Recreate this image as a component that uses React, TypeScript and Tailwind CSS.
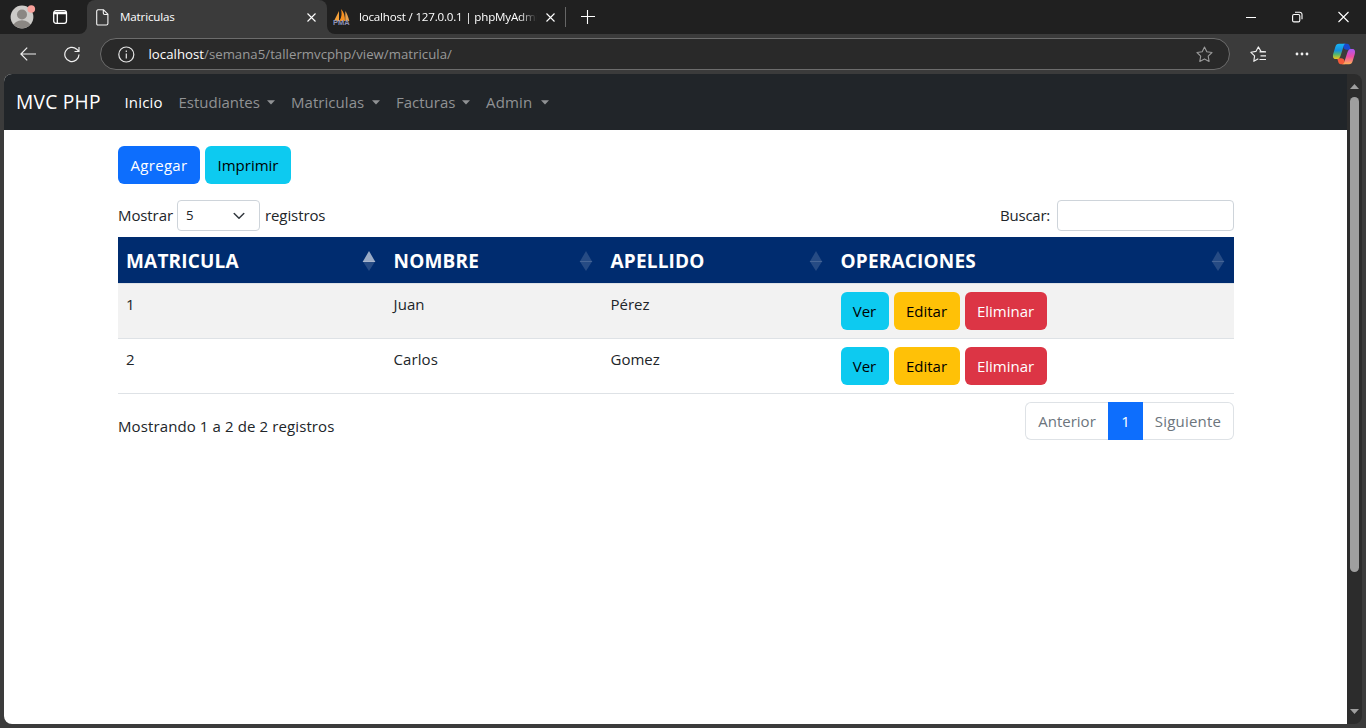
import type { ReactNode } from "react";

function NavItem({ label, className }: { label: string; className: string }) {
  return (
    <a className={`flex items-center justify-between text-[#909294] ${className}`}>
      <span>{label}</span>
      <svg width="8" height="5" viewBox="0 0 8 5" fill="currentColor"><path d="M0 .3h8L4 4.5z" /></svg>
    </a>
  );
}

function Button({ children, className }: { children: ReactNode; className: string }) {
  return (
    <button className={`flex h-[38px] shrink-0 items-center justify-center rounded-md pt-px whitespace-nowrap ${className}`}>
      {children}
    </button>
  );
}

function Sort({ active }: { active?: boolean }) {
  return (
    <svg width="14" height="20" viewBox="0 0 14 20" fill="#fff" className="shrink-0">
      <path d="M7 0l6.4 11H.6z" opacity={active ? 0.6 : 0.15} />
      <path d="M.6 10h12.8L7 20z" opacity={0.15} />
    </svg>
  );
}

const columns = [
  { title: "MATRICULA", active: true },
  { title: "NOMBRE" },
  { title: "APELLIDO" },
  { title: "OPERACIONES" },
];

const rows = [
  { id: "1", nombre: "Juan", apellido: "Pérez" },
  { id: "2", nombre: "Carlos", apellido: "Gomez" },
];

const grid = "grid grid-cols-[267.5px_217px_230px_401.5px]";

function TabStrip() {
  return (
    <div className="flex h-[34px] bg-[#3b3b3b] text-[11.6px] text-white">
      <div className="flex w-[87px] items-center rounded-br-lg bg-[#202020] pl-[10px]">
        <svg width="26" height="28" viewBox="0 0 26 28">
          <defs><clipPath id="avatar"><circle cx="12" cy="14" r="11.2" /></clipPath></defs>
          <circle cx="12" cy="14" r="11.4" fill="#cdcbc8" />
          <g clipPath="url(#avatar)" fill="#8b8783">
            <circle cx="12" cy="11.5" r="5" />
            <ellipse cx="12" cy="23" rx="8.5" ry="5.8" />
          </g>
          <circle cx="21.3" cy="6" r="3.8" fill="#f9a09a" />
        </svg>
        <svg className="ml-[16px]" width="16" height="16" viewBox="0 0 16 16" fill="none" stroke="#fff" strokeWidth="1.3">
          <rect x="1.7" y="1.7" width="12.8" height="12.6" rx="2.3" />
          <path d="M2 3.3h12.3M2 4.6h12.3M5.3 5v9" />
        </svg>
      </div>
      <div className="flex w-[240px] items-center bg-[#202020]">
        <div className="flex h-full w-full items-center rounded-t-lg bg-[#3b3b3b] pl-[9px]">
          <svg width="13" height="17" viewBox="0 0 13 17" fill="none" stroke="#f5f5f5" strokeWidth="1.1">
            <path d="M2 .8h5.5l4.4 4.4v9.3a1.5 1.5 0 0 1-1.5 1.5H2A1.3 1.3 0 0 1 .7 14.5V2.3A1.4 1.4 0 0 1 2 .8zM7.3.8v3.3c0 .9.5 1.4 1.4 1.4h3.2" />
          </svg>
          <span className="ml-[11px] w-[187px] tracking-[-0.15px]">Matriculas</span>
          <svg width="9" height="9" viewBox="0 0 9 9" stroke="#fff" strokeWidth="1.1"><path d="M.5.5l8 8M8.5.5l-8 8" /></svg>
        </div>
      </div>
      <div className="flex flex-1 items-center rounded-bl-lg bg-[#202020] pl-[6px]">
        <svg width="17" height="17" viewBox="0 0 17 17">
          <path d="M1 12L6 2v10z" fill="#f5a13a" />
          <path d="M6.300 12C9 8 9 4 8 0c3 3 4 7 4 12z" fill="#f78f1e" />
          <path d="M12.300 12V2c2 3 3 6 4 10z" fill="#e8a04c" />
          <text x="0" y="16" fontSize="7" fontWeight="700" textLength="16.5" lengthAdjust="spacingAndGlyphs" fill="#8d91b8" fontFamily="Liberation Sans">PMA</text>
        </svg>
        <span className="ml-[9px] w-[178px] overflow-hidden mask-r-from-90% whitespace-nowrap tracking-[-0.2px]">localhost / 127.0.0.1 | phpMyAdmin</span>
        <svg className="ml-[9px]" width="9" height="9" viewBox="0 0 9 9" stroke="#fff" strokeWidth="1.1"><path d="M.5.5l8 8M8.5.5l-8 8" /></svg>
        <span className="ml-[10px] h-5 w-px bg-[#666]" />
        <svg className="ml-[15px]" width="14" height="14" viewBox="0 0 14 14" stroke="#fff" strokeWidth="1.1"><path d="M0 6.500h14M6.500 0v14" /></svg>
        <svg className="mr-[16px] ml-auto" width="104" height="12" viewBox="0 0 104 12" fill="none" stroke="#fff" strokeWidth="1.1">
          <path d="M0 6.500h10M92.500 1l10 10M102.500 1l-10 10" />
          <rect x="46.6" y="3.5" width="7.2" height="7.4" rx="1.4" />
          <path d="M49 1.300h4.800a2.200 2.200 0 0 1 2.200 2.200v4.800" />
        </svg>
      </div>
    </div>
  );
}

const star = "M8.5 1l2.3 4.8 5.2.7-3.8 3.7.9 5.2-4.6-2.5-4.7 2.5.9-5.2L1 6.5l5.2-.7z";

function Toolbar() {
  return (
    <div className="flex h-10 items-center bg-[#3b3b3b] pl-5">
      <svg width="16" height="14" viewBox="0 0 16 14" fill="none" stroke="#f0f0f0" strokeWidth="1.2"><path d="M16 7H1M7.2.7L.9 7l6.3 6.3" /></svg>
      <svg className="ml-[28px]" width="16" height="17" viewBox="0 0 16 17" fill="none" stroke="#f0f0f0" strokeWidth="1.2"><path d="M15 8.5A7.1 7.1 0 1 1 12.7 3.2L15 5.4M15 1v4.5h-4.5" /></svg>
      <div className="ml-5 flex h-8 w-[1130px] items-center rounded-full border border-[#6c6c6c] bg-[#292929] pl-[16.5px]">
        <svg width="17" height="17" viewBox="0 0 17 17" fill="none" stroke="#e6e6e6" strokeWidth="1.2">
          <circle cx="8.3" cy="8.5" r="7.5" /><path d="M8.3 7.5v5M8.3 4.5v1.4" />
        </svg>
        <span className="ml-[14px] pt-px text-[13.2px] tracking-[0.03px] text-[#999]"><span className="text-white">localhost</span>/semana5/tallermvcphp/view/matricula/</span>
        <svg className="mr-[16px] ml-auto" width="17" height="17" viewBox="0 0 17 17" fill="none" stroke="#999" strokeWidth="1.1"><path d={star} strokeLinejoin="round" /></svg>
      </div>
      <svg className="ml-[20px]" width="17" height="17" viewBox="0 0 17 17" fill="none" stroke="#f0f0f0" strokeWidth="1.15" strokeLinejoin="round">
        <path d="M16 5.8l-5-.4L8.3.9 5.9 5.4.9 6.3l3.7 3.6-.8 5.4 4.5-2.5M9.5 5.9H16M10.5 9.8H16M9.5 13.5H16" />
      </svg>
      <svg className="ml-[28px]" width="14" height="4" viewBox="0 0 14 4" fill="#f0f0f0"><circle cx="2" cy="2" r="1.4" /><circle cx="7" cy="2" r="1.4" /><circle cx="12" cy="2" r="1.4" /></svg>
      <svg className="ml-[23px]" width="24" height="22" viewBox="0 0 24 22">
        <defs>
          <linearGradient id="cl" x1="0" y1="0" x2="0" y2="1"><stop stopColor="#18b5f5" /><stop offset=".45" stopColor="#168fdc" /><stop offset=".7" stopColor="#57b66b" /><stop offset="1" stopColor="#f2c51b" /></linearGradient>
          <linearGradient id="cr" x1="0" y1="0" x2="0" y2="1"><stop stopColor="#a957f2" /><stop offset=".5" stopColor="#ec4da5" /><stop offset="1" stopColor="#ffb155" /></linearGradient>
        </defs>
        <path d="M11 .8h4c2 0 2.500 1.600 3 3.200l.8 2.700h-4c-2 0-3-1-3.500-2.700z" fill="#1949cf" />
        <path d="M13 21.200H9c-2 0-2.600-1.500-3-3.200l-.9-2.700h4c2 0 3 1 3.500 2.700z" fill="#f35a3a" />
        <path d="M7 .8h7c-2 0-2.300 2-3 4.200L8.800 12c-.7 2.200-1.500 4-3.500 4H3.500C1 16 .6 13.500 1.200 11L3.300 4C4 1.800 5 .8 7 .8z" fill="url(#cl)" />
        <path d="M17 21.200h-7c2 0 2.300-2 3-4.200l2.200-7c.7-2.200 1.500-4 3.500-4h1.800c2.500 0 2.900 2.500 2.300 5l-2.100 7c-.7 2.200-1.700 3.200-3.700 3.200z" fill="url(#cr)" />
      </svg>
    </div>
  );
}

export default function App() {
  return (
    <div className="h-[728px] w-[1366px] overflow-hidden bg-[#3b3b3b] font-['Open_Sans','Noto_Sans',sans-serif]">
      <TabStrip />
      <Toolbar />
      <div className="mx-1 flex h-[650px] overflow-hidden rounded-lg text-[15px] text-[#212529]">
        <main className="w-[1343px] bg-white">
          <nav className="flex h-14 items-center bg-[#212529] pl-3 pt-px">
            <a className="w-[108.5px] text-[19.2px] tracking-[0.25px] text-white">MVC PHP</a>
            <a className="w-[54px] tracking-[0.15px] text-white">Inicio</a>
            <NavItem label="Estudiantes" className="w-[96.5px]" />
            <NavItem label="Matriculas" className="ml-4 w-[89px] tracking-[0.05px]" />
            <NavItem label="Facturas" className="ml-4 w-[74px]" />
            <NavItem label="Admin" className="ml-4 w-[63px] tracking-[0.15px]" />
          </nav>
          <div className="ml-[114px] w-[1116px] pt-4">
            <div className="flex gap-[5px]">
              <Button className="w-[82px] bg-[#0d6efd] tracking-[0.3px] text-white">Agregar</Button>
              <Button className="w-[86px] bg-[#0dcaf0] text-black">Imprimir</Button>
            </div>
            <div className="mt-4 flex h-[31px] items-center">
              <span className="w-[59px] tracking-[-0.1px]">Mostrar</span>
              <div className="flex h-full w-[83px] items-center justify-between rounded border border-[#ced4da] pt-px pr-[14px] pl-2 text-[13.2px]">
                5
                <svg width="12" height="8" viewBox="0 0 12 8" fill="none" stroke="#343a40" strokeWidth="1.5" strokeLinecap="round" strokeLinejoin="round"><path d="M1.200 1.500L6 6.200l4.800-4.700" /></svg>
              </div>
              <span className="ml-[5px] tracking-[-0.1px]">registros</span>
              <span className="mr-[7px] ml-auto tracking-[-0.25px]">Buscar:</span>
              <input className="h-full w-[177px] rounded border border-[#ced4da] bg-white" />
            </div>
            <div className={`${grid} mt-1.5 h-[46px] bg-[#002c6f] pt-px text-[19px] font-bold tracking-[0.18px] text-white`}>
              {columns.map((c) => (
                <div key={c.title} className="flex items-center justify-between pt-px pr-[9.5px] pl-2">
                  <span>{c.title}</span>
                  <Sort active={c.active} />
                </div>
              ))}
            </div>
            <div className="border-t border-[#dee2e6]">
              {rows.map((r) => (
                <div key={r.id} className={`${grid} h-[55px] border-b border-[#dee2e6] odd:bg-[#f2f2f2]`}>
                  <span className="px-2 pt-[9px]">{r.id}</span>
                  <span className="px-2 pt-[9px] tracking-[0.1px]">{r.nombre}</span>
                  <span className="px-2 pt-[9px]">{r.apellido}</span>
                  <div className="flex gap-[5px] px-2 pt-2">
                    <Button className="w-[48px] bg-[#0dcaf0] text-black">Ver</Button>
                    <Button className="w-[66px] bg-[#ffc107] text-black">Editar</Button>
                    <Button className="w-[82px] bg-[#dc3545] text-white">Eliminar</Button>
                  </div>
                </div>
              ))}
            </div>
            <div className="flex justify-between pt-2">
              <span className="pt-[13px] tracking-[0.11px]">Mostrando 1 a 2 de 2 registros</span>
              <div className="flex h-[38px] w-[209px] text-[#6c757d]">
                <span className="flex w-[83px] items-center justify-center rounded-l-md border border-r-0 border-[#dee2e6]">Anterior</span>
                <span className="flex w-[35px] items-center justify-center bg-[#0d6efd] text-white">1</span>
                <span className="flex w-[91px] items-center justify-center rounded-r-md border border-l-0 border-[#dee2e6] tracking-[0.2px]">Siguiente</span>
              </div>
            </div>
          </div>
        </main>
        <div className="flex w-[15px] flex-col items-center bg-[#2c2c2c] pt-[10px] pb-[10px]">
          <svg width="9" height="5" viewBox="0 0 9 5" fill="#9f9f9f"><path d="M0 5L4.500 0 9 5z" /></svg>
          <div className="mt-2 h-[475px] w-[9px] rounded-full bg-[#9f9f9f]" />
          <svg className="mt-auto" width="9" height="5" viewBox="0 0 9 5" fill="#9f9f9f"><path d="M0 0h9L4.500 5z" /></svg>
        </div>
      </div>
    </div>
  );
}
